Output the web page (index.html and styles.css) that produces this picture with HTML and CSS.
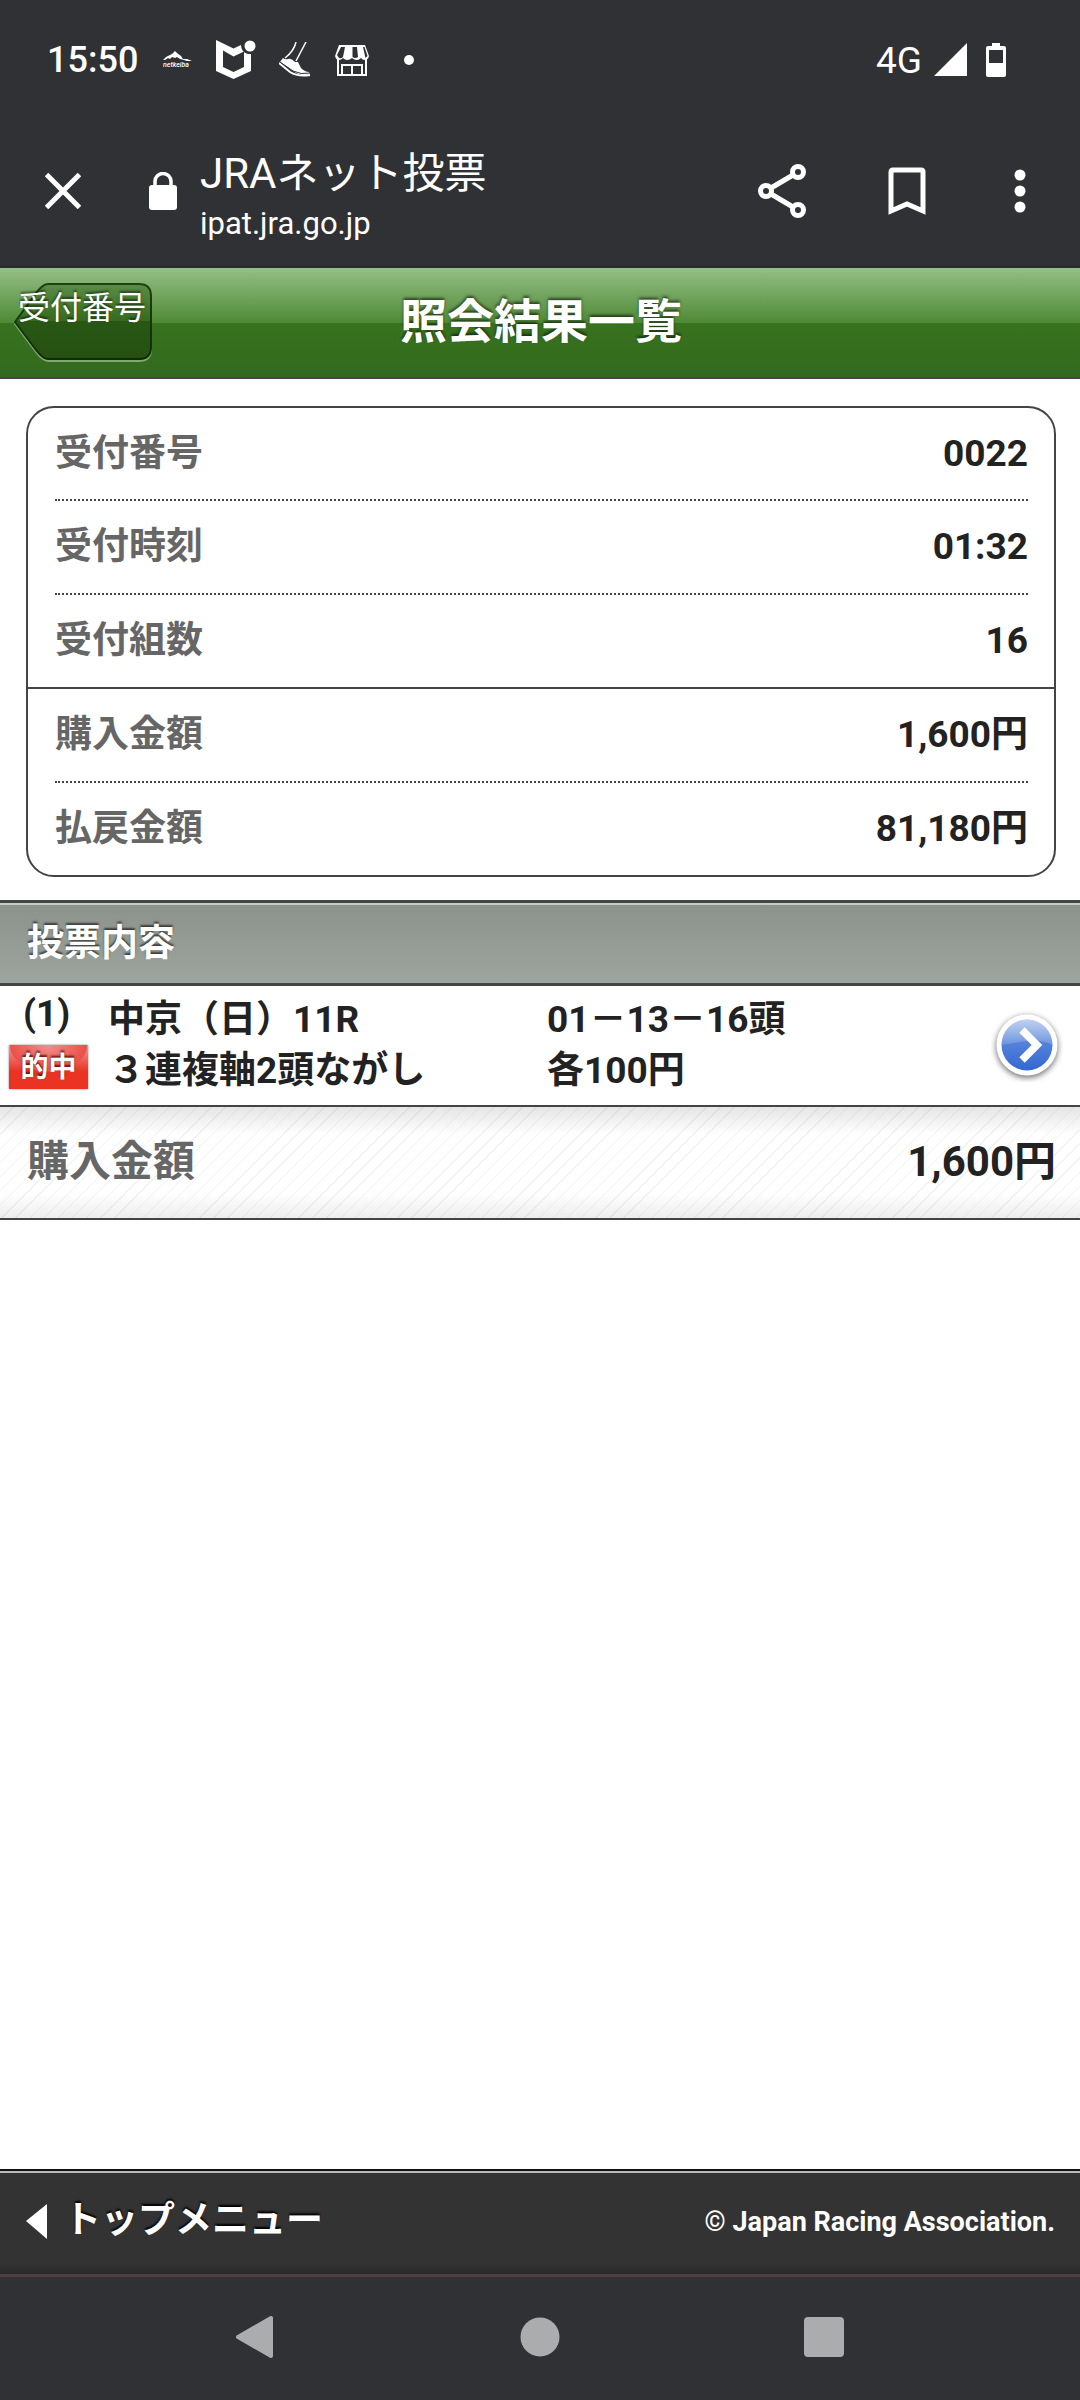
FILE: index.html
```html
<!DOCTYPE html>
<html lang="ja">
<head>
<meta charset="utf-8">
<meta name="viewport" content="width=device-width, initial-scale=1">
<title>JRAネット投票</title>
<link rel="stylesheet" href="styles.css">
</head>
<body>
<div class="status">
  <span class="clock">15:50</span>
  <div class="notices">
    <svg class="ico-keiba" width="30" height="18" viewBox="0 0 30 18" aria-hidden="true">
      <path d="M0 9L3 6l4-2 2-1 3-3 2 2 4 3 2 3 4 0 5 2-5 0-3-1-4-1-3-2-2 1-3-1-2 2-2-1-3 2z" fill="#fff"/>
      <text x="0" y="16" class="keiba-text">netkeiba</text>
    </svg>
    <svg class="ico-shield" width="40" height="40" viewBox="0 0 40 40" aria-hidden="true">
      <path fill="#fff" fill-rule="evenodd" d="M0 0l17.500 8.500L25 5q0 7 7 9l3 0V31l-17.500 8L0 31zM7 10.500V27l10.500 5L28 27V11.500l-10.500 5z"/>
      <circle cx="34" cy="6" r="7.500" fill="#303135"/><circle cx="34" cy="6" r="5.500" fill="#fff"/>
    </svg>
    <svg class="ico-shoe" width="32" height="36" viewBox="0 0 32 36" aria-hidden="true">
      <g fill="none" stroke="#fff" stroke-width="1.500"><path d="M17 0Q15 9 6 16"/><path d="M27 0L17 19"/></g>
      <path fill="#fff" d="M4 16q2 2 5 1 3-1 7 3l3 0 3 6q4 4 8 4l1 2q-9 3-17-3L1 20z"/>
      <path d="M0 21l11 9q8 5 20 3" fill="none" stroke="#fff" stroke-width="2"/>
      <path d="M1 20l13 9q8 4 17 2" fill="none" stroke="#303135" stroke-width="1"/>
    </svg>
    <svg class="ico-store" width="36" height="32" viewBox="0 0 36 32" aria-hidden="true">
      <path d="M5 1h26l4 11q-1 4-4 4-3 0-4-2-2 2-4 2-3 0-5-2-2 2-5 2-2 0-4-2-2 2-4 2-3 0-4-4z" fill="#fff"/>
      <path d="M7 3h4L9 13q-2 2-4 1l-2-3zM18.500 3h4.500l1 10q-3 2-5.500 0zM29 3h1.500l3 9-2 2z" fill="#303135"/>
      <path d="M4 15v16h28V15M8 31V21h20v10M18 21v10" fill="none" stroke="#fff" stroke-width="2"/>
    </svg>
    <svg class="ico-dot" width="10" height="10" viewBox="0 0 10 10" aria-hidden="true"><circle cx="5" cy="5" r="5" fill="#fff"/></svg>
  </div>
  <span class="network">4G</span>
  <svg width="33" height="34" viewBox="0 0 33 34" aria-hidden="true"><path d="M33 0v33H0z" fill="#fff"/></svg>
  <svg class="ico-battery" width="20" height="34" viewBox="0 0 20 34" aria-hidden="true"><path fill="#fff" fill-rule="evenodd" d="M6 0h8v3h4q2 0 2 2v27q0 2-2 2H2q-2 0-2-2V5q0-2 2-2h4zM3 7v13h14V7z"/></svg>
</div>

<div class="toolbar">
  <button class="tool close" aria-label="閉じる">
    <svg width="36" height="36" viewBox="0 0 36 36"><path d="M1.500 1.500l33 33M34.500 1.500l-33 33" stroke="#fff" stroke-width="5"/></svg>
  </button>
  <span class="tool lock">
    <svg width="30" height="38" viewBox="0 0 30 38" aria-hidden="true"><rect x="1" y="13" width="28" height="25" rx="3" fill="#fff"/><path d="M7 14V9.500a8 8 0 0 1 16 0V14" fill="none" stroke="#fff" stroke-width="3.500"/></svg>
  </span>
  <div class="site">
    <div class="site-title">JRAネット投票</div>
    <div class="site-url">ipat.jra.go.jp</div>
  </div>
  <button class="tool share" aria-label="共有">
    <svg width="48" height="54" viewBox="0 0 48 54"><g fill="none" stroke="#fff" stroke-width="5"><circle cx="8" cy="27" r="5.500"/><circle cx="40" cy="8" r="5.500"/><circle cx="40" cy="46" r="5.500"/><path d="M13 24l22-13M13 30l22 13"/></g></svg>
  </button>
  <button class="tool bookmark" aria-label="ブックマーク">
    <svg width="38" height="48" viewBox="0 0 38 48"><path d="M3 44V5q0-2 2-2h28q2 0 2 2v39l-16-7z" fill="none" stroke="#fff" stroke-width="5"/></svg>
  </button>
  <button class="tool more" aria-label="メニュー">
    <svg width="12" height="44" viewBox="0 0 12 44"><g fill="#fff"><circle cx="6" cy="6" r="5.500"/><circle cx="6" cy="22" r="5.500"/><circle cx="6" cy="38" r="5.500"/></g></svg>
  </button>
</div>

<header class="head">
  <a class="back" href="#">
    <svg class="back-shape" width="140" height="80" viewBox="0 0 140 80" aria-hidden="true">
      <defs><linearGradient id="bk" x1="0" y1="0" x2="0" y2="1">
        <stop offset="0" stop-color="#5a8c45"/><stop offset=".5" stop-color="#356a1f"/><stop offset=".5" stop-color="#285714"/><stop offset="1" stop-color="#265011"/>
      </linearGradient><linearGradient id="bs" x1="0" y1="0" x2="0" y2="1"><stop offset="0" stop-color="#1f430f"/><stop offset="1" stop-color="#102a06"/></linearGradient></defs>
      <path d="M1 41L22 12Q29 3 34 3h91q12 0 12 12v51q0 12-12 12H34q-5 0-12-9z" fill="none" stroke="#7fa971" stroke-width="2"/>
      <path d="M1 39L22 10Q29 1 34 1h91q12 0 12 12v51q0 12-12 12H34q-5 0-12-9z" fill="url(#bk)" stroke="url(#bs)" stroke-width="2"/>
    </svg>
    <span class="back-label">受付番号</span>
  </a>
  <h1 class="title">照会結果一覧</h1>
</header>

<main>
  <dl class="summary">
    <div class="pair"><dt>受付番号</dt><dd>0022</dd></div>
    <div class="pair"><dt>受付時刻</dt><dd>01:32</dd></div>
    <div class="pair"><dt>受付組数</dt><dd>16</dd></div>
    <div class="pair group"><dt>購入金額</dt><dd>1,600円</dd></div>
    <div class="pair"><dt>払戻金額</dt><dd>81,180円</dd></div>
  </dl>

  <h2 class="section">投票内容</h2>
  <a class="bet" href="#">
    <span class="bet-no"><span class="num">(1)</span><span class="hit">的中</span></span>
    <span class="bet-col">中京（日）11R<br>３連複軸2頭ながし</span>
    <span class="bet-col">01－13－16頭<br>各100円</span>
    <svg class="go" width="72" height="72" viewBox="0 0 72 72" aria-hidden="true">
      <defs><linearGradient id="bl" x1="0" y1="0" x2="0" y2="1"><stop offset="0" stop-color="#6f97e0"/><stop offset="1" stop-color="#3468d2"/></linearGradient>
      <linearGradient id="gl" x1="0" y1="0" x2="0" y2="1"><stop offset="0" stop-color="#fff" stop-opacity=".55"/><stop offset="1" stop-color="#fff" stop-opacity=".15"/></linearGradient></defs>
      <circle class="go-ring" cx="36" cy="35" r="30.500" fill="#fff"/>
      <circle cx="36" cy="35" r="25.500" fill="url(#bl)"/>
      <path d="M10.500 35a25.500 25.500 0 0 1 51 0Q50 29 36 31 20 33 10.500 35z" fill="url(#gl)"/>
      <path d="M31 20l15 15-15 15" fill="none" stroke="#fff" stroke-width="7.500"/>
    </svg>
  </a>
  <div class="total"><span class="total-label">購入金額</span><span>1,600円</span></div>
</main>

<footer class="foot">
  <a class="top-link" href="#">
    <svg width="22" height="36" viewBox="0 0 22 36" aria-hidden="true"><path d="M0 17L21 0v35z" fill="#fff"/></svg>
    <span>トップメニュー</span>
  </a>
  <small class="copy">© Japan Racing Association.</small>
</footer>

<nav class="sysnav">
  <button class="key" aria-label="戻る"><svg width="40" height="44" viewBox="0 0 40 44"><path d="M2 22L35 3v38z" fill="#abacae" stroke="#abacae" stroke-width="4" stroke-linejoin="round"/></svg></button>
  <button class="key" aria-label="ホーム"><svg width="40" height="40" viewBox="0 0 40 40"><circle cx="20" cy="20" r="19.500" fill="#abacae"/></svg></button>
  <button class="key" aria-label="履歴"><svg width="40" height="40" viewBox="0 0 40 40"><rect width="40" height="40" rx="4" fill="#abacae"/></svg></button>
</nav>
</body>
</html>
```
FILE: styles.css
```css
* { box-sizing: border-box; }

body {
  margin: 0;
  min-height: 100vh;
  display: flex;
  flex-direction: column;
  background: #fff;
  color: #222;
  font-family: Roboto, "Noto Sans CJK JP", sans-serif;
  font-size: 37px;
  font-weight: 700;
}

svg { display: block; flex: none; }
a { color: inherit; text-decoration: none; }
button { border: 0; padding: 0; background: none; color: inherit; font: inherit; }

/* Phone status bar */
.status {
  display: flex;
  align-items: center;
  height: 120px;
  padding: 0 74px 0 47px;
  background: #303135;
  color: #fff;
  font-size: 36px;
  font-weight: 500;
}
.notices { display: flex; align-items: center; flex: 1; gap: 23px; margin-left: 25px; }
.keiba-text { fill: #fff; font-size: 7px; font-style: italic; }
.ico-dot { margin-left: 11px; }
.network { margin-right: 12px; font-size: 37px; font-weight: 400; }
.ico-battery { margin-left: 19px; }

/* Browser toolbar */
.toolbar {
  display: flex;
  align-items: flex-start;
  padding: 30px 54px 15px 45px;
  border-bottom: 3px solid #2b2c30;
  background: #303135;
  color: #fff;
  font-weight: 400;
}
.tool { display: flex; align-items: center; height: 82px; }
.lock { margin-left: 67px; }
.site { flex: 1; margin-left: 22px; }
.site-title { font-size: 42px; line-height: 48px; }
.site-url { font-size: 31px; line-height: 52px; }
.bookmark { margin-left: 82px; }
.more { margin-left: 88px; }

/* Page header */
.head {
  display: grid;
  grid-template-columns: 1fr auto 1fr;
  align-items: center;
  height: 111px;
  padding: 0 12px 2px 14px;
  border-bottom: 2px solid #444;
  background: linear-gradient(#95bf86, #4f8a36 50%, #38731f 50%, #33691e);
  color: #fff;
}
.back { position: relative; width: 136px; height: 78px; font-size: 32px; font-weight: 400; text-align: center; }
.back-shape { position: absolute; left: 0; top: 0; }
.back-label { position: relative; display: block; line-height: 50px; text-shadow: 0 -2px 2px rgba(0, 0, 0, .5); }
.title { margin: 0; font-size: 47px; line-height: 60px; text-shadow: 0 -2px 3px rgba(0, 0, 0, .6); }

/* Receipt summary */
.summary { margin: 27px 24px 23px 26px; border: 2px solid #444; border-radius: 28px; }
.pair {
  display: flex;
  justify-content: space-between;
  margin: 0 26px 0 27px;
  border-top: 2px dotted #444;
  line-height: 92px;
}
.pair:first-child { border-top: 0; line-height: 91px; }
.pair.group { margin: 0; padding: 0 26px 0 27px; border-top-style: solid; }
.pair dt { color: #666; }
.pair dd { margin: 0; }

.section {
  margin: 0;
  padding: 2px 27px 0;
  border: solid #444;
  border-width: 3px 0;
  background: linear-gradient(#8b918b, #9ea49e);
  box-shadow: inset 0 2px #c8cac8;
  color: #fff;
  font-size: 37px;
  line-height: 78px;
  text-shadow: 0 -2px 2px rgba(0, 0, 0, .6);
}

/* Bets */
.bet {
  display: grid;
  grid-template-columns: 79px 422fr 427fr 72px;
  column-gap: 20px;
  padding: 0 17px 0 9px;
  border-bottom: 2px solid #444;
}
.bet-no { display: flex; flex-direction: column; gap: 3px; }
.num { padding-left: 14px; line-height: 56px; }
.hit {
  height: 44px;
  background: radial-gradient(ellipse 80% 100% at 50% 0, #ef8f8d, #ea5149 60%, transparent 62%), linear-gradient(#f09a98, #ea3323 60%);
  box-shadow: 0 0 2px rgba(0, 0, 0, .5);
  color: #fff;
  font-size: 28px;
  line-height: 46px;
  text-align: center;
  text-shadow: 0 -2px 2px rgba(80, 0, 0, .8);
}
.bet-col { padding: 8px 0 9px; line-height: 51px; white-space: nowrap; }
.go { align-self: center; }
.go-ring { filter: drop-shadow(0 2px 3px rgba(0, 0, 0, .6)); }

.total {
  display: flex;
  justify-content: space-between;
  padding: 0 24px 2px 27px;
  border-bottom: 2px solid #444;
  background:
    linear-gradient(rgba(0, 0, 0, .1), transparent 25%, transparent 78%, rgba(0, 0, 0, .07)),
    repeating-linear-gradient(135deg, #fff 0 9px, #f2f2f2 9px 10px);
  font-size: 42px;
  line-height: 109px;
}
.total-label { color: #666; }

/* Footer */
.foot {
  display: flex;
  justify-content: space-between;
  align-items: center;
  height: 108px;
  margin-top: auto;
  padding: 0 25px 2px 26px;
  border-top: 2px solid #111;
  border-bottom: 3px solid #4d4040;
  background: linear-gradient(#bbb 2px, #333 2px, #333 92px, #292929);
  color: #fff;
}
.top-link { display: flex; align-items: center; gap: 16px; line-height: 52px; text-shadow: 0 -2px 2px #000; }
.top-link span { padding-bottom: 2px; }
.copy { font-size: 27px; }

/* System navigation keys */
.sysnav {
  display: flex;
  justify-content: center;
  gap: 244px;
  height: 123px;
  padding-bottom: 3px;
  background: #303135;
}
.key { display: flex; align-items: center; }
```
